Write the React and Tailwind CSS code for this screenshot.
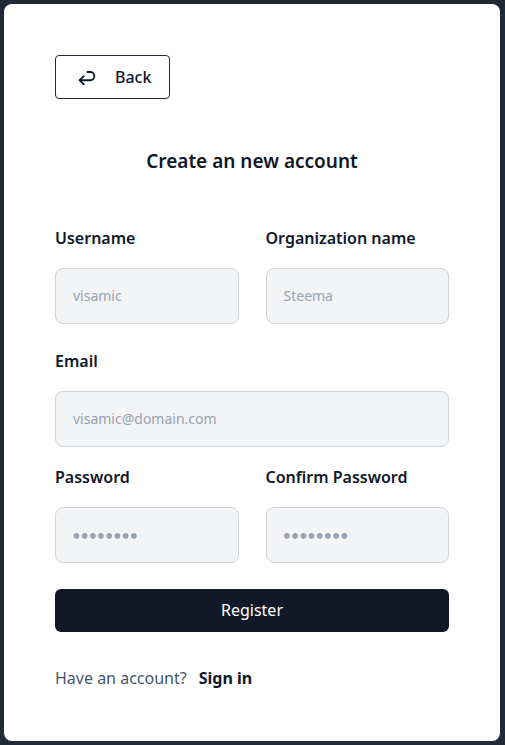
export default function App() {
  const font = { fontFamily: '"Noto Sans", Lato, sans-serif' };
  const inputCls =
    "h-[56px] w-full rounded-lg border border-gray-300 bg-[#f3f4f6] px-[17px] text-[14px] text-gray-400 placeholder-gray-400 outline-none";
  const pwCls =
    "h-[56px] w-full rounded-lg border border-gray-300 bg-[#f3f4f6] px-[16px] font-['Lato'] text-[15px] tracking-[-0.5px] text-gray-400 placeholder-gray-400 outline-none";
  return (
    <div className="min-h-[745px] w-[505px] bg-[#1f2937] pb-1 pl-1 pr-[5px] pt-1" style={font}>
      <div className="flex h-[737px] flex-col rounded-lg bg-white px-[51px] pt-[51px]">
        <div>
          <button className="flex h-[44px] w-[115px] items-center rounded border border-gray-800 bg-white pl-[20px] text-[16px] font-medium text-gray-900">
            <svg width="22" height="22" viewBox="0 0 24 24" fill="none" stroke="#111827" strokeWidth="2" strokeLinecap="round" strokeLinejoin="round">
              <path d="M8.5 11 L4 15.5 L8.5 20" />
              <path d="M4 15.5 H15.5 A4.5 4.5 0 0 0 15.5 6.5 H12.5" />
            </svg>
            <span className="ml-[17px]">Back</span>
          </button>
        </div>
        <h1 className="mt-[48px] text-center text-[19px] font-semibold text-gray-900">Create an new account</h1>
        <div className="mt-[50px] grid grid-cols-2 gap-x-[27px]">
          <div>
            <label className="block text-[16px] font-semibold text-gray-900">Username</label>
            <input className={`${inputCls} mt-[18px]`} placeholder="visamic" />
          </div>
          <div>
            <label className="block text-[16px] font-semibold text-gray-900">Organization name</label>
            <input className={`${inputCls} mt-[18px]`} placeholder="Steema" />
          </div>
        </div>
        <div className="mt-[25px]">
          <label className="block text-[16px] font-semibold text-gray-900">Email</label>
          <input className={`${inputCls} mt-[18px]`} placeholder="visamic@domain.com" />
        </div>
        <div className="mt-[18px] grid grid-cols-2 gap-x-[27px]">
          <div>
            <label className="block text-[16px] font-semibold text-gray-900">Password</label>
            <input className={`${pwCls} mt-[18px]`} placeholder="••••••••" />
          </div>
          <div>
            <label className="block text-[16px] font-semibold text-gray-900">Confirm Password</label>
            <input className={`${pwCls} mt-[18px]`} placeholder="••••••••" />
          </div>
        </div>
        <button className="mt-[26px] h-[43px] w-full rounded-md bg-[#111827] text-[16px] font-normal text-white">
          Register
        </button>
        <div className="mt-[34px] text-[16px]">
          <span className="text-slate-600">Have an account?</span>
          <span className="ml-[12px] font-bold text-gray-900">Sign in</span>
        </div>
      </div>
    </div>
  );
}
